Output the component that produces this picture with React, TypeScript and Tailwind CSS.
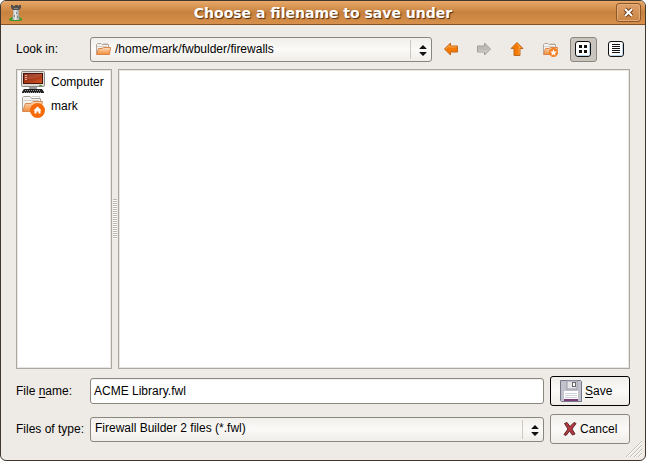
import React from "react";

const look = "rounded-[3px] border border-[#8b867e] bg-linear-to-b from-[#f1efeb] via-[#fbfaf8] to-[#f0ede8]";

function Combo({ id, value, icon }: { id: string; value: string; icon?: React.ReactNode }) {
  return (
    <div className="relative min-w-0 flex-1">
      <select
        id={id}
        className={`block h-[25px] w-full appearance-none pr-6 pb-0.5 text-xs text-black outline-none ${look} ${icon ? "pl-6" : "pl-1"}`}
      >
        <option>{value}</option>
      </select>
      {icon && <span className="pointer-events-none absolute top-1 left-[5px]">{icon}</span>}
      <span className="pointer-events-none absolute inset-y-[3px] right-[5px] flex items-center border-l border-[#cdc8c0] pl-2">
        <svg width="8" height="11" viewBox="0 0 8 11" className="mt-0.5">
          <path d="M4 0L7.500 3.500V4H.5V3.500ZM.5 7H7.500V7.500L4 11L.5 7.500Z" fill="#111" />
        </svg>
      </span>
    </div>
  );
}

function Folder({ children }: { children?: React.ReactNode }) {
  return (
    <svg width="16" height="16" viewBox="0 0 16 16">
      <path d="M1.5 12.5V3.5L2.5 2.5H6L7 3.5H13.5V11" fill="#f3f1ee" stroke="#b3a79d" />
      <path d="M2 5.5H12M8 2.5H13" stroke="#d8d3cd" />
      <path d="M1.5 13.5L3.5 7.5H7L8.5 6.5H15.5L14.5 13.5Z" fill="url(#folderFace)" stroke="#dc8548" />
      {children}
    </svg>
  );
}

function Arrow({ turn, gray }: { turn: string; gray?: boolean }) {
  return (
    <svg width="16" height="16" viewBox="0 0 16 16" className={turn}>
      <path
        d="M1.5 8L7.5 2V5H14.5V11H7.5V14Z"
        fill={gray ? "#bdbab6" : "#f57900"}
        stroke={gray ? "#a19e9a" : "#bf6a1c"}
        strokeLinejoin="round"
      />
      <path d="M3 8L6.5 4.5V6H13.5" fill="none" stroke={gray ? "#d2d0cc" : "#ffa64a"} />
    </svg>
  );
}

function Tool({ label, pressed, children }: { label: string; pressed?: boolean; children: React.ReactNode }) {
  return (
    <button
      type="button"
      aria-label={label}
      className={`flex h-[25px] w-[27px] shrink-0 items-start rounded-[3px] border pt-[3px] pl-1 ${pressed ? "border-[#8b867e] bg-[#c9c4bd]" : "border-transparent"}`}
    >
      {children}
    </button>
  );
}

function ViewIcon({ d }: { d: string }) {
  return (
    <svg width="16" height="16" viewBox="0 0 16 16">
      <rect x=".5" y=".5" width="15" height="15" rx="2.5" fill="#fff" stroke="#111" />
      <path d="M14.5 3V13.5L13.5 14.5H3" fill="none" stroke="#b5d4f0" />
      <path d={d} fill="#111" />
    </svg>
  );
}

export default function App() {
  return (
    <main className="relative flex min-h-screen flex-col overflow-hidden rounded-md border border-[#40382f] bg-[#eeebe6] font-['Liberation_Sans',sans-serif] text-xs text-black">
      <svg width="0" height="0" className="absolute">
        <defs>
          <linearGradient id="folderFace" x1="0" y1="0" x2="0" y2="1">
            <stop offset="0" stopColor="#fde0c2" />
            <stop offset="1" stopColor="#f28b35" />
          </linearGradient>
          <linearGradient id="screen" x1="0" y1="0" x2="1" y2="1">
            <stop offset="0" stopColor="#7d1d07" />
            <stop offset="1" stopColor="#d4572a" />
          </linearGradient>
          <linearGradient id="stone" x1="0" y1="0" x2="1" y2="0">
            <stop offset="0" stopColor="#8b8e90" />
            <stop offset=".4" stopColor="#eceeee" />
            <stop offset="1" stopColor="#85888a" />
          </linearGradient>
        </defs>
      </svg>
      <header className="flex h-6 items-center border-b border-[#865326] bg-linear-to-b from-[#e8a868] via-[#c8823f] to-[#d8914c] px-1">
        <div className="flex w-[25px] justify-start pl-0.5">
          <svg width="18" height="18" viewBox="0 0 18 18">
            <path d="M2 15L5 13H13L15 15V16L13 17H4L2 16Z" fill="#3f9a20" />
            <path d="M6 6H12V12L13 16H5L6 12Z" fill="url(#stone)" />
            <path d="M4 1H6V2H8V1H11V2H12V1H14V4L12 6H6L4 4Z" fill="#55504c" />
            <path d="M7 4H11V5H7ZM9 8H10V10H9ZM7 11H8V13H7ZM10 12H11V14H10Z" fill="#85888a" />
          </svg>
        </div>
        <h1 className="flex-1 text-center font-['DejaVu_Sans',sans-serif] text-sm leading-5 font-bold text-white [text-shadow:1px_1px_1px_#4d2c10]">
          Choose a filename to save under
        </h1>
        <button
          type="button"
          aria-label="Close"
          className="flex h-[19px] w-[25px] items-center justify-center rounded-[3px] border border-[#8d5626] bg-linear-to-b from-[#dfa06a] to-[#cb8543] inset-ring inset-ring-[#e3ad7a]"
        >
          <svg width="11" height="11" viewBox="0 0 11 11">
            <path d="M2 2L9 9M9 2L2 9" stroke="#70401a" strokeWidth="4" />
            <path d="M2 2L9 9M9 2L2 9" stroke="#fff" strokeWidth="2" />
          </svg>
        </button>
      </header>

      <form className="flex flex-1 flex-col px-[15px] pt-3 pb-4" onSubmit={(e) => e.preventDefault()}>
        <div className="flex items-center gap-1.5">
          <label htmlFor="dir" className="w-[68px] pb-0.5">Look in:</label>
          <Combo id="dir" value="/home/mark/fwbulder/firewalls" icon={<Folder />} />
          <Tool label="Back"><Arrow turn="" /></Tool>
          <Tool label="Forward"><Arrow turn="rotate-180" gray /></Tool>
          <Tool label="Parent directory"><Arrow turn="rotate-90" /></Tool>
          <Tool label="Create new folder">
            <Folder>
              <circle cx="11.5" cy="11.5" r="4.5" fill="#f57c1f" />
              <path d="M11.5 8L12.4 10.4L15 10.6L13 12.2L13.7 14.7L11.5 13.3L9.3 14.7L10 12.2L8 10.6L10.6 10.4Z" fill="#fff" />
            </Folder>
          </Tool>
          <Tool label="List view" pressed>
            <ViewIcon d="M4 4H7V7H4ZM9 4H12V7H9ZM4 9H7V12H4ZM9 9H12V12H9Z" />
          </Tool>
          <Tool label="Detail view">
            <ViewIcon d="M4 3H12V4H4ZM4 5H12V6H4ZM4 7H12V8H4ZM4 9H12V10H4ZM4 11H12V12H4Z" />
          </Tool>
        </div>

        <div className="mt-[7px] flex flex-1">
          <ul className="w-24 border border-[#aca79f] bg-white inset-ring inset-ring-[#e9e6e1]">
            <li className="flex h-6 items-center gap-1.5 pl-1">
              <svg width="24" height="24" viewBox="0 0 24 24">
                <rect x=".5" y="1.5" width="23" height="15" rx="1" fill="#dedcd8" stroke="#8a8783" />
                <rect x="2.5" y="3.5" width="19" height="10" fill="url(#screen)" stroke="#4b1609" />
                <path d="M3 9Q12 10 21 5V4H3Z" fill="#fff" opacity=".12" />
                <path d="M4 5.5H6M4 7.5H6M4 9.5H6" stroke="#f0a58a" />
                <path d="M18 15.5H21" stroke="#58a023" />
                <path d="M8 17H16V19H8Z" fill="#999" />
                <path d="M3 19H21L23 22V23H1V22Z" fill="#222" />
                <path d="M4 20.5H20M3 22.5H21" stroke="#999" strokeDasharray="1 1" />
              </svg>
              Computer
            </li>
            <li className="flex h-6 items-center gap-1.5 pl-1">
              <svg width="24" height="24" viewBox="0 0 24 24">
                <path d="M1.5 17V3.5L2.5 2.5H9L10.5 4.5H19.5V9" fill="#f4f2ef" stroke="#aaa39c" />
                <path d="M10.5 2.5H18.5V4M3 6.5H18" fill="none" stroke="#d5d0ca" />
                <path d="M1.5 17.5L4.5 9.5H10L12 7.5H21.5L19 17.5Z" fill="url(#folderFace)" stroke="#d88a52" />
                <circle cx="16.5" cy="16.5" r="7.5" fill="#f66a0a" />
                <path d="M16.5 12.500L20.500 16.5H19.500V19.500H17.5V17.5H15.5V19.500H13.500V16.5H12.500Z" fill="#fff" />
              </svg>
              mark
            </li>
          </ul>
          <div className="flex w-1.5 items-center justify-center">
            <div className="h-10 w-1 bg-[repeating-linear-gradient(to_bottom,#bab5ad_0_1px,#fff_1px_2px)]" />
          </div>
          <div className="flex-1 border border-[#aca79f] bg-white inset-ring inset-ring-[#e9e6e1]" />
        </div>

        <div className="mt-[7px] grid grid-cols-[68px_1fr_80px] items-center gap-x-1.5 gap-y-2">
          <label htmlFor="name" className="whitespace-nowrap">
            File <span className="underline underline-offset-2">n</span>ame:
          </label>
          <input
            id="name"
            defaultValue="ACME Library.fwl"
            className="h-[26px] w-full rounded-[3px] border border-[#8b867e] bg-white px-[3px] inset-shadow-2xs outline-none"
          />
          <button type="submit" className={`flex h-[30px] items-center gap-[3px] pl-[9px] ${look} border-black`}>
            <svg width="22" height="22" viewBox="0 0 22 22">
              <path d="M.5 .5H20.5L21.5 1.5V21.5H1.5L.5 20.5Z" fill="#c2c2cd" stroke="#77778a" />
              <rect x="7" y="1" width="10" height="8" fill="#e6e6ea" stroke="#9a9aa6" />
              <rect x="12.5" y="2.5" width="3" height="4" fill="#fff" stroke="#666" />
              <rect x="4" y="11" width="14" height="9" fill="#fff" />
              <path d="M5 13.5H17M5 15.5H17M5 17.5H17" stroke="#d0d0d8" />
              <path d="M4 19H18V21H4Z" fill="#7d3d78" />
            </svg>
            <span><span className="underline underline-offset-2">S</span>ave</span>
          </button>
          <label htmlFor="type" className="whitespace-nowrap">Files of type:</label>
          <Combo id="type" value="Firewall Builder 2 files (*.fwl)" />
          <button type="button" className={`flex h-[30px] items-center gap-[3px] pl-3 ${look}`}>
            <svg width="14" height="16" viewBox="0 0 14 16">
              <path d="M1.500 2.500L4 1.500L7 5.500L11 1.500L13 2.500L9 8L12 13L9.500 14L6.500 10L3 14.500L1 13.500L5 8Z" fill="#b53a42" stroke="#5f2328" />
            </svg>
            Cancel
          </button>
        </div>
      </form>
      <svg width="16" height="16" viewBox="0 0 16 16" className="absolute right-[3px] bottom-[3px]">
        <path d="M0 16L16 0M4 16L16 4M8 16L16 8M12 16L16 12" stroke="#c3beb6" />
        <path d="M1 16L16 1M5 16L16 5M9 16L16 9M13 16L16 13" stroke="#fff" />
      </svg>
    </main>
  );
}
